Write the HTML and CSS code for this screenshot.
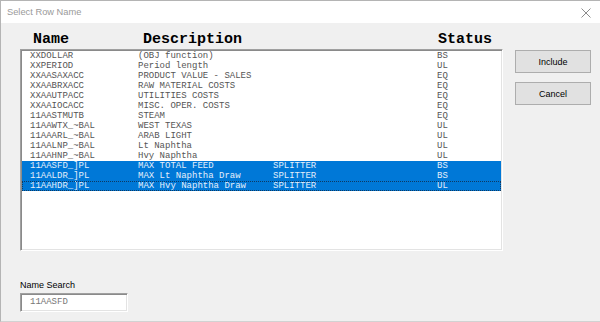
FILE: index.html
```html
<!DOCTYPE html>
<html lang="en">
<head>
    <meta charset="UTF-8">
    <meta name="viewport" content="width=device-width, initial-scale=1.0">
    <title>Select Row Name</title>
    <link rel="stylesheet" href="styles.css">
</head>
<body>
<div class="window">
    <div class="titlebar">
        <span class="title">Select Row Name</span>
        <svg class="close" width="10" height="10" viewBox="0 0 10 10">
            <path d="M0.5 0.5 L9.5 9.5 M9.5 0.5 L0.5 9.5" stroke="#8c8c8c" stroke-width="1" fill="none"/>
        </svg>
    </div>
    <div class="content">
        <div class="top">
            <div class="list-col">
                <div class="col-heads">
                    <span>Name</span>
                    <span>Description</span>
                    <span>Status</span>
                </div>
                <div class="listbox">
                    <div class="row"><span>XXDOLLAR</span><span>(OBJ function)</span><span></span><span>BS</span></div>
                    <div class="row"><span>XXPERIOD</span><span>Period length</span><span></span><span>UL</span></div>
                    <div class="row"><span>XXAASAXACC</span><span>PRODUCT VALUE - SALES</span><span></span><span>EQ</span></div>
                    <div class="row"><span>XXAABRXACC</span><span>RAW MATERIAL COSTS</span><span></span><span>EQ</span></div>
                    <div class="row"><span>XXAAUTPACC</span><span>UTILITIES COSTS</span><span></span><span>EQ</span></div>
                    <div class="row"><span>XXAAIOCACC</span><span>MISC. OPER. COSTS</span><span></span><span>EQ</span></div>
                    <div class="row"><span>11AASTMUTB</span><span>STEAM</span><span></span><span>EQ</span></div>
                    <div class="row"><span>11AAWTX_~BAL</span><span>WEST TEXAS</span><span></span><span>UL</span></div>
                    <div class="row"><span>11AAARL_~BAL</span><span>ARAB LIGHT</span><span></span><span>UL</span></div>
                    <div class="row"><span>11AALNP_~BAL</span><span>Lt Naphtha</span><span></span><span>UL</span></div>
                    <div class="row"><span>11AAHNP_~BAL</span><span>Hvy Naphtha</span><span></span><span>UL</span></div>
                    <div class="row selected"><span>11AASFD_]PL</span><span>MAX TOTAL FEED</span><span>SPLITTER</span><span>BS</span></div>
                    <div class="row selected"><span>11AALDR_]PL</span><span>MAX Lt Naphtha Draw</span><span>SPLITTER</span><span>BS</span></div>
                    <div class="row selected focused"><span>11AAHDR_]PL</span><span>MAX Hvy Naphtha Draw</span><span>SPLITTER</span><span>UL</span></div>
                </div>
            </div>
            <div class="actions">
                <button class="btn">Include</button>
                <button class="btn">Cancel</button>
            </div>
        </div>
        <div class="search">
            <label class="search-label">Name Search</label>
            <div class="search-box">11AASFD</div>
        </div>
    </div>
</div>
</body>
</html>
```

FILE: styles.css
```css
* {
    box-sizing: border-box;
    margin: 0;
    padding: 0;
}

body {
    width: 600px;
    height: 322px;
    overflow: hidden;
    background-color: #f0f0f0;
    font-family: "Liberation Sans", Arial, sans-serif;
}

.window {
    width: 600px;
    height: 322px;
    display: flex;
    flex-direction: column;
    border-top: 1px solid #b4b4b4;
    border-left: 1px solid #b4b4b4;
    border-bottom: 1px solid #d2d2d2;
    background-color: #f0f0f0;
}

.titlebar {
    height: 22px;
    flex-shrink: 0;
    display: flex;
    align-items: center;
    justify-content: space-between;
    padding: 0 9px 0 6px;
    background-color: #fff;
}

.title {
    font-size: 9.3px;
    color: #9a9a9a;
}

.close {
    display: block;
    margin-top: 1px;
}

.content {
    padding-left: 19px;
}

.top {
    display: flex;
    gap: 12px;
}

.list-col {
    width: 483px;
}

.col-heads {
    height: 26px;
    padding: 9px 0 0 13px;
    display: grid;
    grid-template-columns: 110px 295px auto;
    font-family: "Liberation Mono", "Courier New", monospace;
    font-weight: bold;
    font-size: 15px;
    line-height: 15px;
    color: #000;
}

.listbox {
    width: 483px;
    height: 202px;
    background-color: #fff;
    border-style: solid;
    border-width: 1px;
    border-color: #a0a0a0 #fff #fff #a0a0a0;
    box-shadow: inset 1px 1px 0 #8a8a8a, inset -1px -1px 0 #e3e3e3;
    padding-top: 1px;
    font-family: "Liberation Mono", "Courier New", monospace;
    font-size: 9px;
    line-height: 10px;
    color: #555;
}

.row {
    height: 10px;
    display: grid;
    grid-template-columns: 108px 135px 164px auto;
    padding-left: 8px;
    margin: 0 1px;
    white-space: pre;
}

.row.selected {
    background-color: #0078d7;
    color: #e4eefa;
}

.row.focused {
    outline: 1px dotted #0d3a63;
    outline-offset: -1px;
}

.actions {
    padding-top: 27px;
    display: flex;
    flex-direction: column;
    gap: 9px;
}

.btn {
    width: 76px;
    height: 23px;
    background-color: #e1e1e1;
    border: 1px solid #adadad;
    font-family: "Liberation Sans", Arial, sans-serif;
    font-size: 9px;
    color: #000;
}

.search {
    margin-top: 29px;
    display: flex;
    flex-direction: column;
    gap: 2px;
}

.search-label {
    font-size: 9px;
    line-height: 11px;
    color: #000;
}

.search-box {
    width: 108px;
    height: 19px;
    background-color: #fff;
    border-style: solid;
    border-width: 1px;
    border-color: #a0a0a0 #fff #fff #a0a0a0;
    box-shadow: inset 1px 1px 0 #8a8a8a, inset -1px -1px 0 #e3e3e3;
    padding-left: 9px;
    font-family: "Liberation Mono", "Courier New", monospace;
    font-size: 9px;
    line-height: 17px;
    color: #777;
}
```
